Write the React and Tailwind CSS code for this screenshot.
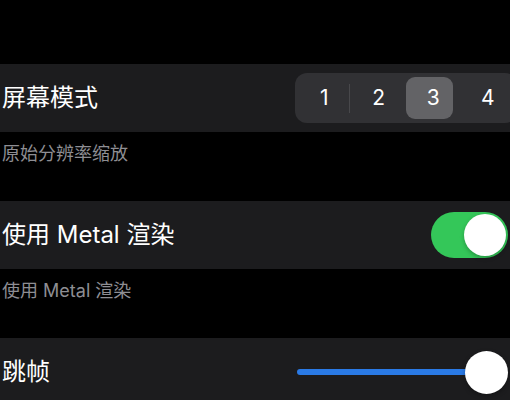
import { useState } from 'react';

const FONT = { fontFamily: 'Inter, "Noto Sans CJK SC", sans-serif' };

const MODES = ['1', '2', '3', '4'];

function Segmented({ value, onChange }) {
  return (
    <div className="-mr-[9px] flex h-[50px] w-[222px] shrink-0 items-stretch rounded-[12px] bg-[#313134] p-[2px]">
      {MODES.map((m, i) => {
        const active = m === value;
        const prevActive = i > 0 && MODES[i - 1] === value;
        const showSep = i > 0 && !active && !prevActive;
        return (
          <button
            key={m}
            onClick={() => onChange(m)}
            className="relative flex flex-1 items-center justify-center text-[21px] text-white"
          >
            {showSep && (
              <span className="absolute -left-[3px] top-[9px] h-[29px] w-px bg-[#48484b]" />
            )}
            {active && (
              <span className="absolute left-0 top-[2px] h-[42px] w-[47px] rounded-[9px] bg-[#636366]" />
            )}
            <span className="relative">{m}</span>
          </button>
        );
      })}
    </div>
  );
}

function Toggle({ on, onChange }) {
  return (
    <button
      onClick={() => onChange(!on)}
      className={`flex h-[46px] w-[77px] shrink-0 items-center rounded-full px-[2px] ${
        on ? 'justify-end bg-[#34c759]' : 'justify-start bg-[#39393d]'
      }`}
    >
      <span className="h-[42px] w-[42px] rounded-full bg-white shadow-[0_2px_4px_rgba(0,0,0,0.25)]" />
    </button>
  );
}

function Slider() {
  return (
    <div className="flex w-[211px] shrink-0 items-center">
      <div className="h-[6px] flex-1 rounded-l-full bg-[#2a7ae6]" />
      <div className="-ml-[2px] h-[43px] w-[43px] rounded-full bg-white shadow-[0_2px_5px_rgba(0,0,0,0.3)]" />
    </div>
  );
}

function Row({ title, children }) {
  return (
    <div className="flex h-[68px] items-center justify-between bg-[#1c1c1e] pl-[2px] pr-[2px]">
      <span className="text-[24px] leading-none text-white">{title}</span>
      {children}
    </div>
  );
}

function Note({ text }) {
  return (
    <div className="h-[69px] pl-[2px] pt-[10px] text-[18px] leading-6 text-[#8e8e93]">{text}</div>
  );
}

export default function App() {
  const [mode, setMode] = useState('3');
  const [metal, setMetal] = useState(true);

  return (
    <div className="h-[400px] w-[510px] overflow-hidden bg-black pt-[64px]" style={FONT}>
      <Row title="屏幕模式">
        <Segmented value={mode} onChange={setMode} />
      </Row>
      <Note text="原始分辨率缩放" />

      <Row title="使用 Metal 渲染">
        <Toggle on={metal} onChange={setMetal} />
      </Row>
      <Note text="使用 Metal 渲染" />

      <Row title="跳帧">
        <Slider />
      </Row>
    </div>
  );
}
